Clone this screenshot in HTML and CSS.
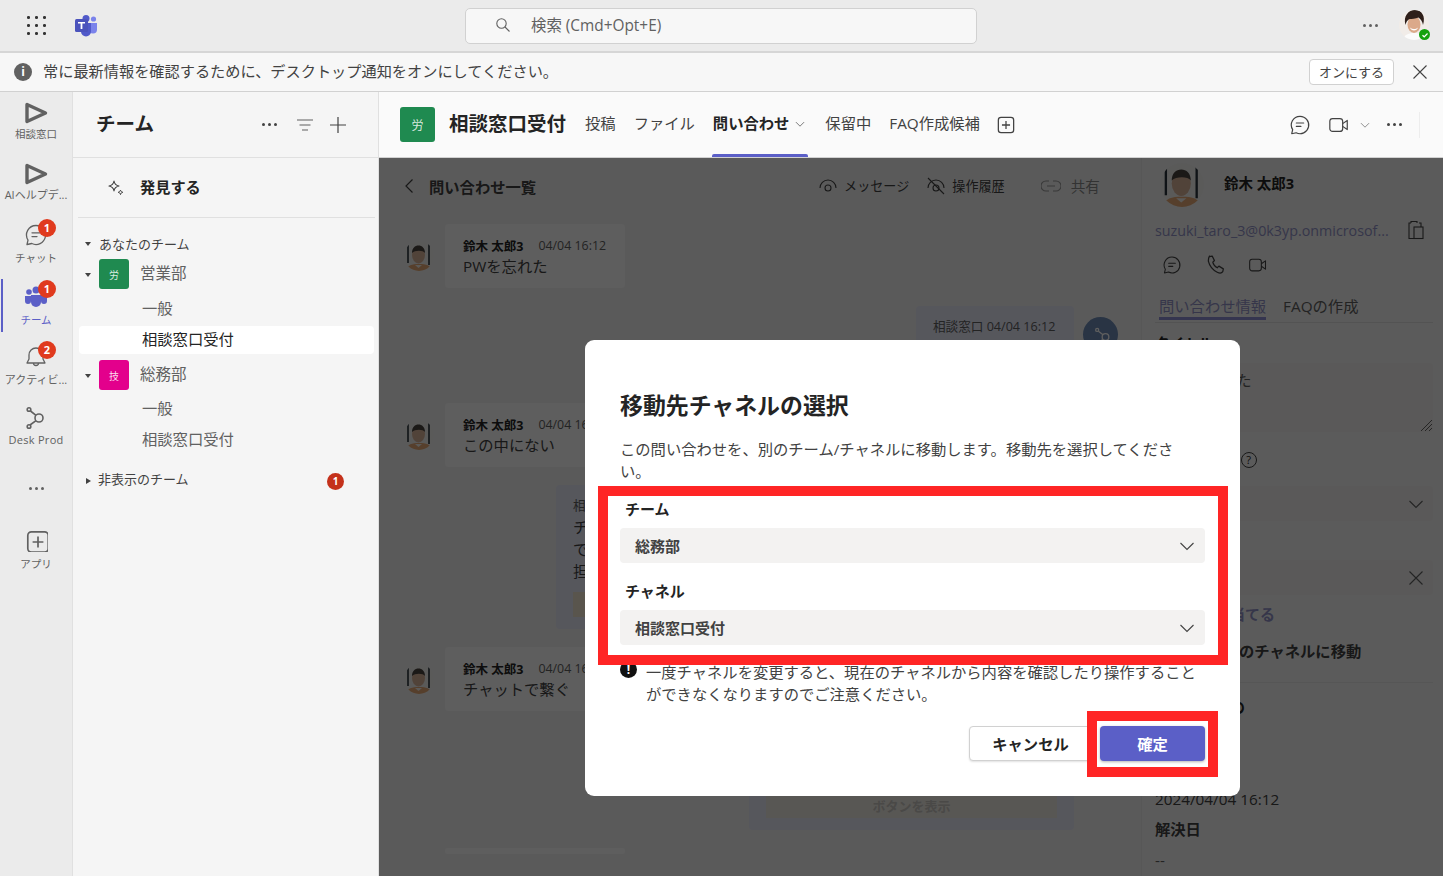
FILE: index.html
```html
<!DOCTYPE html>
<html lang="ja">
<head>
    <meta charset="UTF-8">
    <meta name="viewport" content="width=device-width, initial-scale=1.0">
    <title>相談窓口受付</title>
    <link rel="stylesheet" href="styles.css">
</head>
<body>
    <svg class="defs" width="0" height="0">
        <symbol id="i-send" viewBox="0 0 24 24"><path d="M3 3.500 21.500 12 3 20.500Z" fill="none" stroke="currentColor" stroke-width="3.400" stroke-linejoin="round"/></symbol>
        <symbol id="i-chat" viewBox="0 0 24 24"><path d="M12 2.500a9.500 9.500 0 1 1-4.200 18L3 21.500l1-4.400A9.500 9.500 0 0 1 12 2.500Z" fill="none" stroke="currentColor" stroke-width="1.300" stroke-linejoin="round"/><path d="M8 9.800h8M8 13.600h5" stroke="currentColor" stroke-width="1.300" stroke-linecap="round"/></symbol>
        <symbol id="i-video" viewBox="0 0 24 24"><rect x="2" y="5" width="14" height="14" rx="3" fill="none" stroke="currentColor" stroke-width="1.300"/><path d="M16 10.500 21 7v10l-5-3.500" fill="none" stroke="currentColor" stroke-width="1.300" stroke-linejoin="round"/></symbol>
        <symbol id="i-chev" viewBox="0 0 16 16"><path d="M1.500 5 8 11.500 14.500 5" fill="none" stroke="currentColor" stroke-width="1.100"/></symbol>
        <symbol id="i-x" viewBox="0 0 16 16"><path d="M1.500 1.500l13 13M14.500 1.500l-13 13" fill="none" stroke="currentColor" stroke-width="1.100"/></symbol>
        <symbol id="i-plusbox" viewBox="0 0 20 20"><rect x="1.500" y="1.500" width="17" height="17" rx="3" fill="none" stroke="currentColor" stroke-width="1.400"/><path d="M10 5.500v9M5.500 10h9" stroke="currentColor" stroke-width="1.400"/></symbol>
        <symbol id="i-hub" viewBox="0 0 24 24"><g fill="none" stroke="currentColor" stroke-width="1.600"><circle cx="15" cy="12" r="4"/><circle cx="5" cy="3.500" r="1.800"/><circle cx="5" cy="20.500" r="1.800"/><path d="M6.500 5 12 9.300M6 19l6-4.300"/></g></symbol>
        <symbol id="i-man" viewBox="0 0 30 30">
            <rect width="30" height="30" fill="#f4f4f2"/>
            <path d="M4 0v22M25 2v22" stroke="#2a343c" stroke-width="1.600"/>
            <path d="M2 30c1-6 6-7 13-7s12 1 13 7Z" fill="#e9ac78"/>
            <ellipse cx="14.500" cy="14" rx="6.500" ry="8.500" fill="#dcb69c"/>
            <path d="M8 12c0-5 3-7.500 6.500-7.500S21 7 21 12c-2-3-10-3-13 0Z" fill="#4a4540"/>
            <path d="M11 24l3.500 3 3.500-3" fill="#f6f3ee"/>
        </symbol>
    </svg>

    <header class="topbar">
        <span class="waffle"><i></i><i></i><i></i><i></i><i></i><i></i><i></i><i></i><i></i></span>
        <svg class="teams-logo" width="24" height="22" viewBox="0 0 24 22">
            <circle cx="19.500" cy="4" r="2.600" fill="#7b83eb"/>
            <path d="M15 8h8v6.500a4 4 0 0 1-8 0Z" fill="#7b83eb"/>
            <circle cx="12" cy="3.500" r="3.500" fill="#5059c9"/>
            <path d="M7 8h10v8.500a5 5 0 0 1-10 0Z" fill="#5059c9"/>
            <rect x="1" y="4" width="13" height="13" rx="1.500" fill="#4b53bc"/>
            <path d="M4 7h7v1.600H8.400V14H6.600V8.600H4Z" fill="#fff"/>
        </svg>
        <div class="search">
            <svg width="16" height="16" viewBox="0 0 16 16"><circle cx="6.500" cy="6.500" r="4.700" fill="none" stroke="#616161" stroke-width="1.100"/><path d="M10 10l4.500 4.500" stroke="#616161" stroke-width="1.100"/></svg>
            <span>検索 (Cmd+Opt+E)</span>
        </div>
        <span class="dots top-dots"><i></i><i></i><i></i></span>
        <span class="me">
            <svg width="30" height="30" viewBox="0 0 30 30">
                <clipPath id="me-clip"><circle cx="15" cy="15" r="15"/></clipPath>
                <g clip-path="url(#me-clip)">
                    <rect width="30" height="30" fill="#f1ece8"/>
                    <path d="M4 30c1-5 5-7 11-7s10 2 11 7Z" fill="#fbfbfb"/>
                    <ellipse cx="15" cy="14.500" rx="6.500" ry="8.500" fill="#dba98a"/>
                    <path d="M6.500 15C4 6 9.500 0 16 0s11 6 8 15c-.5-3-2-6-4.500-7.500-3 1.500-7 1.500-9 1.500-2 1-3.500 3-4 6Z" fill="#2e1f1a"/>
                    <path d="M11 17.500c2.500 2 5.500 2 8 0-1 4-7 4-8 0Z" fill="#fff"/>
                </g>
            </svg>
            <span class="status"><svg width="8" height="8" viewBox="0 0 8 8"><path d="M1.500 4.200 3.200 5.800 6.500 2.500" fill="none" stroke="#fff" stroke-width="1.200"/></svg></span>
        </span>
    </header>

    <div class="notice">
        <span class="info-icon">i</span>
        <span class="notice-text">常に最新情報を確認するために、デスクトップ通知をオンにしてください。</span>
        <button class="notice-btn">オンにする</button>
        <svg class="notice-close" width="16" height="16"><use href="#i-x"/></svg>
    </div>

    <div class="app">
        <nav class="rail">
            <a class="rail-item"><svg width="24" height="24"><use href="#i-send"/></svg><span>相談窓口</span></a>
            <a class="rail-item"><svg width="24" height="24"><use href="#i-send"/></svg><span class="wide">AIヘルプデ...</span></a>
            <a class="rail-item rail-low"><svg width="24" height="24"><use href="#i-chat"/></svg><b class="badge">1</b><span>チャット</span></a>
            <a class="rail-item rail-low active">
                <svg width="24" height="24" viewBox="0 0 24 24" fill="#5b5fc7"><circle cx="5" cy="8" r="2.800"/><circle cx="19" cy="8" r="2.800"/><circle cx="12" cy="6" r="3.500"/><path d="M1 12h6v5a3 3 0 0 1-6 0ZM17 12h6v5a3 3 0 0 1-6 0Z"/><path d="M7 11h10v7a5 5 0 0 1-10 0Z"/></svg>
                <b class="badge">1</b><span>チーム</span>
            </a>
            <a class="rail-item rail-low">
                <svg width="24" height="24" viewBox="0 0 24 24"><path d="M12 3a7 7 0 0 1 7 7v4l2 4H3l2-4v-4a7 7 0 0 1 7-7Z" fill="none" stroke="currentColor" stroke-width="1.300" stroke-linejoin="round"/><path d="M9.500 18a2.500 2.500 0 0 0 5 0" fill="none" stroke="currentColor" stroke-width="1.300"/></svg>
                <b class="badge">2</b><span class="wide">アクティビ...</span>
            </a>
            <a class="rail-item rail-hub"><svg width="24" height="24"><use href="#i-hub"/></svg><span class="latin">Desk Prod</span></a>
            <a class="rail-item rail-more"><span class="dots"><i></i><i></i><i></i></span></a>
            <a class="rail-item rail-apps"><svg width="24" height="24" viewBox="-2 -2 24 24"><use href="#i-plusbox"/></svg><span>アプリ</span></a>
        </nav>

        <aside class="teams">
            <div class="teams-head">
                <h2>チーム</h2>
                <span class="dots"><i></i><i></i><i></i></span>
                <svg class="head-filter" width="16" height="12" viewBox="0 0 16 12"><path d="M0 1h16M2.500 6h11M5 11h6" stroke="#616161" stroke-width="1.100"/></svg>
                <svg class="head-plus" width="16" height="16" viewBox="0 0 16 16"><path d="M8 0v16M0 8h16" stroke="#424242" stroke-width="1.200"/></svg>
            </div>
            <div class="discover">
                <svg width="18" height="18" viewBox="0 0 18 18"><path d="M7 2c.5 3 2 4.500 5 5-3 .5-4.500 2-5 5-.5-3-2-4.500-5-5 3-.5 4.500-2 5-5Z" fill="none" stroke="#424242" stroke-width="1.100" stroke-linejoin="round"/><path d="M13.500 11c.2 1.300 1 2 2.300 2.300-1.300.2-2 1-2.300 2.300-.2-1.300-1-2-2.300-2.300 1.300-.3 2-1 2.300-2.300Z" fill="none" stroke="#424242" stroke-width="1"/></svg>
                <span>発見する</span>
            </div>
            <div class="tree">
                <div class="section-row"><i class="caret"></i>あなたのチーム</div>
                <div class="team-row"><i class="caret"></i><span class="tile tile-green">労</span><span class="team-name">営業部</span></div>
                <div class="channels">
                    <div class="channel">一般</div>
                    <div class="channel selected">相談窓口受付</div>
                </div>
                <div class="team-row"><i class="caret"></i><span class="tile tile-pink">技</span><span class="team-name">総務部</span></div>
                <div class="channels channels-next">
                    <div class="channel">一般</div>
                    <div class="channel">相談窓口受付</div>
                </div>
                <div class="section-row hidden-teams"><i class="caret caret-right"></i>非表示のチーム<b class="count">1</b></div>
            </div>
        </aside>

        <main class="content">
            <div class="channel-head">
                <span class="tile tile-big tile-green">労</span>
                <h1>相談窓口受付</h1>
                <nav class="tabs">
                    <a>投稿</a>
                    <a>ファイル</a>
                    <a class="on">問い合わせ<svg width="10" height="10"><use href="#i-chev"/></svg></a>
                    <a>保留中</a>
                    <a>FAQ作成候補</a>
                </nav>
                <svg class="tab-add" width="18" height="18" viewBox="0 0 20 20"><use href="#i-plusbox"/></svg>
                <div class="head-actions">
                    <svg width="22" height="22"><use href="#i-chat"/></svg>
                    <svg class="act-video" width="22" height="22"><use href="#i-video"/></svg>
                    <svg class="act-chev" width="10" height="10"><use href="#i-chev"/></svg>
                    <span class="dots"><i></i><i></i><i></i></span>
                    <i class="act-rule"></i>
                </div>
            </div>

            <div class="body">
                <section class="chat">
                    <div class="chat-head">
                        <svg width="10" height="16" viewBox="0 0 10 16"><path d="M8.500 1.500 2 8l6.500 6.500" fill="none" stroke="#424242" stroke-width="1.200"/></svg>
                        <strong>問い合わせ一覧</strong>
                        <span class="chat-tool tool-first"><svg width="18" height="18" viewBox="0 0 18 18"><path d="M1 11a8 8 0 0 1 16 0" fill="none" stroke="#424242" stroke-width="1.100"/><circle cx="9" cy="11" r="3" fill="none" stroke="#424242" stroke-width="1.100"/></svg>メッセージ</span>
                        <span class="chat-tool"><svg width="18" height="18" viewBox="0 0 18 18"><path d="M1 11a8 8 0 0 1 16 0" fill="none" stroke="#424242" stroke-width="1.100"/><circle cx="9" cy="11" r="3" fill="none" stroke="#424242" stroke-width="1.100"/><path d="M1 1l16 16" stroke="#424242" stroke-width="1.100"/></svg>操作履歴</span>
                        <span class="chat-tool tool-off"><svg width="20" height="12" viewBox="0 0 20 12"><path d="M8 1H5a5 5 0 0 0 0 10h3M12 1h3a5 5 0 0 1 0 10h-3M6 6h8" fill="none" stroke="#9a9a9a" stroke-width="1.100"/></svg>共有</span>
                    </div>
                    <div class="messages">
                        <div class="msg">
                            <svg class="avatar" width="30" height="30"><use href="#i-man"/></svg>
                            <div class="bubble">
                                <div class="meta"><b>鈴木 太郎3</b><span>04/04 16:12</span></div>
                                <p>PWを忘れた</p>
                            </div>
                        </div>
                        <div class="msg-out out-short">
                            <div class="meta-out">相談窓口 04/04 16:12</div>
                            <span class="bot"><svg width="20" height="20" viewBox="-3 -3 30 30" color="#fff"><use href="#i-hub"/></svg></span>
                        </div>
                        <div class="msg">
                            <svg class="avatar" width="30" height="30"><use href="#i-man"/></svg>
                            <div class="bubble bubble-wide">
                                <div class="meta"><b>鈴木 太郎3</b><span>04/04 16:12</span></div>
                                <p>この中にない</p>
                            </div>
                        </div>
                        <div class="msg-out out-tall">
                            <div class="meta-out">相談窓口</div>
                            <p>チャット</p>
                            <p>で</p>
                            <p>担当</p>
                            <div class="out-btn"></div>
                        </div>
                        <div class="msg">
                            <svg class="avatar" width="30" height="30"><use href="#i-man"/></svg>
                            <div class="bubble bubble-wide">
                                <div class="meta"><b>鈴木 太郎3</b><span>04/04 16:12</span></div>
                                <p>チャットで繋ぐ</p>
                            </div>
                        </div>
                        <div class="msg-out out-last">
                            <div class="out-btn out-btn-last">ボタンを表示</div>
                        </div>
                        <div class="msg"><div class="bubble bubble-end"></div></div>
                    </div>
                </section>

                <aside class="detail">
                    <div class="person">
                        <svg class="person-photo" width="44" height="44" viewBox="0 0 30 30"><use href="#i-man"/></svg>
                        <b>鈴木 太郎3</b>
                    </div>
                    <div class="mail">
                        <span>suzuki_taro_3@0k3yp.onmicrosof...</span>
                        <svg width="18" height="20" viewBox="0 0 18 20"><path d="M4 3H2v15.500h5M4 3V1.500h6V3M12 3h2v4" fill="none" stroke="#424242" stroke-width="1.100"/><rect x="7" y="7" width="9" height="11.500" fill="none" stroke="#424242" stroke-width="1.100"/></svg>
                    </div>
                    <div class="person-actions">
                        <svg width="20" height="20"><use href="#i-chat"/></svg>
                        <svg width="20" height="20" viewBox="0 0 18 18"><path d="M4 1.500 6.500 1l2 4-1.500 1.500c.5 2 2 4 4 5L12.500 10l4 2.500-.5 2.500c-1 1.500-3 1.500-5 .5-4-2-7-6-8-10 0-1.500 0-3 1-4.500Z" fill="none" stroke="#424242" stroke-width="1.100" stroke-linejoin="round"/></svg>
                        <svg width="20" height="20"><use href="#i-video"/></svg>
                    </div>
                    <div class="detail-tabs"><a class="on">問い合わせ情報</a><a>FAQの作成</a></div>
                    <div class="field-label">タイトル</div>
                    <div class="textarea">PWを忘れた<svg width="12" height="12" viewBox="0 0 12 12"><path d="M1 12 12 1M5 12l7-7M9 12l3-3" stroke="#424242" stroke-width=".8"/></svg></div>
                    <div class="field-label field-help">問題の種類<i>?</i></div>
                    <div class="dropdown">選択<svg width="16" height="16"><use href="#i-chev"/></svg></div>
                    <div class="field-label field-gap">担当者</div>
                    <div class="dropdown dropdown-x">担当者<svg width="16" height="16"><use href="#i-x"/></svg></div>
                    <div class="assign">自分に割り当てる</div>
                    <div class="move">別のチームのチャネルに移動</div>
                    <div class="detail-sub">問い合わせの</div>
                    <div class="detail-date">2024/04/04 16:12</div>
                    <div class="detail-sub2">解決日</div>
                    <div class="detail-none">--</div>
                </aside>

                <div class="overlay">
                    <div class="modal">
                        <h3>移動先チャネルの選択</h3>
                        <p class="modal-desc">この問い合わせを、別のチーム/チャネルに移動します。移動先を選択してください。</p>
                        <label class="modal-label">チーム</label>
                        <div class="select">総務部<svg width="16" height="16"><use href="#i-chev"/></svg></div>
                        <label class="modal-label">チャネル</label>
                        <div class="select">相談窓口受付<svg width="16" height="16"><use href="#i-chev"/></svg></div>
                        <div class="warn">
                            <span class="warn-icon">!</span>
                            <p>一度チャネルを変更すると、現在のチャネルから内容を確認したり操作することができなくなりますのでご注意ください。</p>
                        </div>
                        <div class="modal-foot">
                            <button class="btn-cancel">キャンセル</button>
                            <button class="btn-ok">確定</button>
                        </div>
                        <div class="mark mark-form"></div>
                        <div class="mark mark-ok"></div>
                    </div>
                </div>
            </div>
        </main>
    </div>
</body>
</html>
```

FILE: styles.css
```css
* {
    box-sizing: border-box;
}
html, body {
    height: 100%;
}
body {
    margin: 0;
    display: flex;
    flex-direction: column;
    overflow: hidden;
    background-color: #f5f5f5;
    color: #242424;
    font-family: "Open Sans", "Noto Sans CJK JP", sans-serif;
    font-size: 15.3px;
}
p, h1, h2, h3 {
    margin: 0;
}
.defs {
    position: absolute;
}
.dots {
    display: inline-flex;
    gap: 3px;
}
.dots i {
    width: 3px;
    height: 3px;
    border-radius: 50%;
    background-color: #424242;
}

/* top bar */
.topbar {
    flex: none;
    height: 53px;
    display: flex;
    align-items: center;
    background-color: #ebebeb;
    border-bottom: 2px solid #d6d6d6;
}
.waffle {
    margin-left: 27px;
    width: 18px;
    display: grid;
    grid-template-columns: repeat(3, 2.5px);
    gap: 5.5px;
}
.waffle i {
    width: 2.5px;
    height: 2.5px;
    background-color: #333;
    border-radius: 50%;
}
.teams-logo {
    margin-left: 29px;
}
.search {
    margin-left: 367px;
    width: 512px;
    height: 36px;
    display: flex;
    align-items: center;
    gap: 20px;
    padding-left: 29px;
    padding-bottom: 1px;
    background-color: #f7f7f7;
    border: 1px solid #d1d1d1;
    border-radius: 5px;
    color: #616161;
    font-size: 15.4px;
}
.search span {
    padding-bottom: 1px;
}
.top-dots {
    margin-left: 386px;
}
.top-dots i {
    background-color: #616161;
}
.me {
    position: relative;
    margin-left: 21px;
    width: 30px;
    height: 30px;
    margin-top: -1px;
}
.status {
    position: absolute;
    right: -1px;
    bottom: 0;
    width: 11px;
    height: 11px;
    display: flex;
    align-items: center;
    justify-content: center;
    border-radius: 50%;
    background-color: #13a10e;
}

/* notice */
.notice {
    flex: none;
    height: 39px;
    display: flex;
    align-items: center;
    padding-left: 14px;
    background-color: #f7f7f7;
    border-bottom: 1px solid #d1d1d1;
    color: #424242;
}
.info-icon {
    width: 18px;
    height: 18px;
    border-radius: 50%;
    background-color: #616161;
    color: #fff;
    font-size: 12px;
    font-weight: 700;
    line-height: 18px;
    text-align: center;
}
.notice-text {
    margin-left: 11px;
    padding-bottom: 5px;
    font-size: 15.2px;
}
.notice-btn {
    margin-left: auto;
    width: 85px;
    height: 26px;
    padding: 0 0 2px;
    background-color: #fff;
    border: 1px solid #d1d1d1;
    border-radius: 4px;
    color: #424242;
    font-family: inherit;
    font-size: 13px;
}
.notice-close {
    margin: 0 15px 0 18px;
    color: #424242;
}

/* left rail */
.app {
    flex: 1;
    min-height: 0;
    display: flex;
}
.rail {
    flex: none;
    width: 73px;
    background-color: #ebebeb;
    border-right: 1px solid #e0e0e0;
}
.rail-item {
    position: relative;
    height: 61px;
    display: flex;
    flex-direction: column;
    align-items: center;
    padding-top: 9px;
    color: #616161;
    font-size: 10.5px;
    line-height: 16px;
}
.rail-item svg {
    flex: none;
}
.rail-item span {
    margin-top: 1px;
    white-space: nowrap;
}
.rail-item .wide {
    font-size: 11px;
}
.rail-low svg {
    margin-bottom: 2px;
}
.rail-low.active svg {
    margin-bottom: 3px;
}
.rail-item .latin {
    font-size: 11px;
    letter-spacing: .3px;
}
.rail-hub span {
    margin-top: 2px;
}
.rail-more {
    padding-top: 28px;
}
.rail-more .dots i {
    background-color: #616161;
}
.rail-apps span {
    margin-top: 4px;
}
.rail-item.active {
    color: #5b5fc7;
}
.rail-item.active::before {
    content: "";
    position: absolute;
    left: 1px;
    top: 4px;
    width: 2px;
    height: 53px;
    background-color: #5b5fc7;
}
.badge {
    position: absolute;
    left: 38px;
    top: 5px;
    width: 18px;
    height: 18px;
    border-radius: 50%;
    background-color: #e03a1e;
    color: #fff;
    font-size: 11px;
    line-height: 18px;
    text-align: center;
}

/* team list */
.teams {
    flex: none;
    width: 306px;
    background-color: #f5f5f5;
    border-right: 1px solid #e0e0e0;
}
.teams-head {
    height: 66px;
    display: flex;
    align-items: center;
    padding-left: 23px;
    border-bottom: 1px solid #e0e0e0;
}
.teams-head h2 {
    width: 144px;
    padding-bottom: 5px;
    font-size: 19.5px;
    font-weight: 700;
}
.teams-head .dots {
    margin-left: 22px;
}
.head-filter {
    margin-left: 20px;
}
.head-plus {
    margin-left: 17px;
}
.discover {
    height: 60px;
    margin: 0 3px 0 5px;
    display: flex;
    align-items: center;
    gap: 15px;
    padding-left: 29px;
    border-bottom: 1px solid #e0e0e0;
    font-size: 15.2px;
    font-weight: 700;
}
.discover span {
    padding-bottom: 4px;
}
.tree {
    padding: 16px 4px 0 6px;
}
.section-row {
    height: 20px;
    display: flex;
    align-items: center;
    padding-bottom: 2px;
    color: #424242;
    font-size: 13px;
}
.caret {
    flex: none;
    width: 0;
    height: 0;
    margin: 2px 8px 0 6px;
    border-left: 3.5px solid transparent;
    border-right: 3.5px solid transparent;
    border-top: 4.5px solid #424242;
}
.caret-right {
    margin: 6px 7px 0 7px;
    border-top: 3.5px solid transparent;
    border-bottom: 3.5px solid transparent;
    border-left: 5px solid #424242;
    border-right: 0;
}
.team-row {
    height: 30px;
    margin-top: 5px;
    display: flex;
    align-items: center;
    color: #616161;
    font-size: 15.5px;
}
.team-name {
    padding-bottom: 3px;
}
.tile {
    flex: none;
    width: 30px;
    height: 30px;
    display: flex;
    align-items: center;
    justify-content: center;
    border-radius: 3px;
    color: rgba(255, 255, 255, .85);
    font-size: 10px;
}
.team-row .tile {
    margin-right: 11px;
}
.tile-green {
    background-color: #1f8a50;
}
.tile-pink {
    background-color: #e3008c;
}
.channels {
    margin-top: 6px;
    display: flex;
    flex-direction: column;
    gap: 3px;
    padding-bottom: 1px;
}
.channels-next {
    margin-top: 5px;
}
.channel {
    height: 28px;
    line-height: 27px;
    padding-left: 63px;
    color: #616161;
}
.channel.selected {
    background-color: #fff;
    border-radius: 4px;
    color: #242424;
}
.hidden-teams {
    margin-top: 14px;
    position: relative;
}
.count {
    position: absolute;
    left: 248px;
    top: 4px;
    width: 17px;
    height: 17px;
    border-radius: 50%;
    background-color: #c4311b;
    color: #fff;
    font-size: 10px;
    line-height: 17px;
    text-align: center;
}

/* channel header */
.content {
    flex: 1;
    min-width: 0;
    display: flex;
    flex-direction: column;
}
.channel-head {
    flex: none;
    height: 66px;
    display: flex;
    align-items: center;
    padding-left: 21px;
    background-color: #fafafa;
    border-bottom: 1px solid #d1d1d1;
}
.tile-big {
    width: 35px;
    height: 35px;
    font-size: 12px;
}
.channel-head h1 {
    margin-left: 14px;
    padding-bottom: 5px;
    font-size: 19.5px;
    font-weight: 700;
}
.tabs {
    margin-left: 19px;
    height: 100%;
    display: flex;
    gap: 18px;
}
.tabs a {
    position: relative;
    display: flex;
    align-items: center;
    gap: 6px;
    padding-bottom: 5px;
    color: #424242;
    font-size: 15.3px;
}
.tabs a.on {
    padding-right: 2px;
    font-weight: 700;
    color: #242424;
}
.tabs a.on::after {
    content: "";
    position: absolute;
    left: -1px;
    right: -1px;
    bottom: 0;
    height: 3px;
    border-radius: 2px 2px 0 0;
    background-color: #5b5fc7;
}
.tabs a.on svg {
    margin-top: 3px;
    color: #424242;
}
.tab-add {
    margin-left: 17px;
    color: #424242;
}
.head-actions {
    margin-left: auto;
    display: flex;
    align-items: center;
    padding-right: 23px;
    color: #424242;
}
.act-video {
    margin-left: 17px;
}
.act-chev {
    margin-left: 10px;
    color: #616161;
}
.head-actions .dots {
    margin-left: 17px;
}
.act-rule {
    margin-left: 17px;
    width: 1px;
    height: 26px;
    background-color: #ededed;
}

/* chat behind the dialog */
.body {
    flex: 1;
    min-height: 0;
    display: flex;
    position: relative;
    overflow: hidden;
}
.chat {
    width: 762px;
    flex: none;
    overflow: hidden;
}
.chat-head {
    height: 58px;
    display: flex;
    align-items: center;
    padding-left: 25px;
    padding-bottom: 3px;
    color: #424242;
    font-size: 13.1px;
}
.chat-head strong {
    margin-left: 15px;
    font-size: 15.3px;
    font-weight: 700;
    color: #424242;
}
.chat-tool {
    display: flex;
    align-items: center;
    gap: 7px;
    margin-left: 18px;
}
.tool-first {
    margin-left: 283px;
}
.tool-off {
    margin-left: 36px;
    gap: 10px;
    color: #8a8a8a;
    font-size: 14.6px;
}
.messages {
    padding: 8px 67px 0 25px;
    display: flex;
    flex-direction: column;
    gap: 18px;
}
.msg {
    display: flex;
    align-items: center;
    gap: 11px;
}
.avatar {
    flex: none;
    border-radius: 50%;
}
.bubble {
    width: 180px;
    height: 64px;
    padding: 11px 18px;
    background-color: #fff;
    border-radius: 4px;
}
.bubble-wide {
    width: 300px;
}
.bubble-end {
    height: 6px;
    padding: 0;
    margin-left: 41px;
}
.meta {
    display: flex;
    align-items: center;
    gap: 15px;
    height: 20px;
    font-size: 12.4px;
    color: #616161;
    white-space: nowrap;
}
.meta b {
    color: #242424;
    font-size: 12.5px;
}
.bubble p {
    color: #424242;
    font-size: 15.3px;
    line-height: 22px;
}
.msg-out {
    position: relative;
    align-self: flex-end;
    padding: 11px 17px;
    background-color: #e8ebfa;
    border-radius: 4px;
    color: #424242;
}
.out-short {
    width: 158px;
    height: 79px;
}
.out-tall {
    width: 518px;
    height: 144px;
    line-height: 22px;
}
.out-last {
    width: 325px;
    height: 101px;
}
.meta-out {
    font-size: 12.6px;
    line-height: 20px;
    color: #616161;
    white-space: nowrap;
}
.bot {
    position: absolute;
    left: 167px;
    top: 11px;
    width: 35px;
    height: 35px;
    display: flex;
    align-items: center;
    justify-content: center;
    border-radius: 50%;
    background-color: #6f8db8;
}
.out-btn {
    height: 25px;
    margin-top: 10px;
    width: 100%;
    background-color: #f0e6d0;
}
.out-btn-last {
    position: absolute;
    left: 17px;
    right: 17px;
    bottom: 12px;
    width: auto;
    height: 60px;
    display: flex;
    align-items: flex-end;
    justify-content: center;
    padding-bottom: 3px;
    background-color: #efece5;
    color: #c8c5c0;
    font-size: 13px;
    font-weight: 700;
}

/* details column */
.detail {
    flex: 1;
    min-width: 0;
    padding: 5px 10px 0 13px;
    background-color: #f7f7f7;
    border-left: 1px solid #ededed;
    color: #242424;
}
.person {
    display: flex;
    align-items: center;
    gap: 20px;
    font-size: 14.5px;
    height: 44px;
    padding-left: 5px;
}
.person b {
    padding-bottom: 5px;
}
.person-photo {
    border-radius: 50%;
}
.mail {
    margin-top: 11px;
    height: 24px;
    display: flex;
    align-items: center;
    justify-content: space-between;
    padding-right: 8px;
    color: #9394c9;
    font-size: 14.3px;
    white-space: nowrap;
}
.person-actions {
    margin-top: 13px;
    height: 20px;
    display: flex;
    gap: 23px;
    padding-left: 7px;
    color: #424242;
}
.detail-tabs {
    margin-top: 19px;
    height: 29px;
    display: flex;
    gap: 17px;
    padding-left: 4px;
    border-bottom: 1px solid #e0e0e0;
    color: #616161;
    line-height: 24px;
}
.detail-tabs a.on {
    height: 26px;
    color: #9394c9;
    border-bottom: 3px solid #8f90d6;
}
.field-label {
    margin-top: 9px;
    height: 24px;
    line-height: 24px;
    font-weight: 700;
    font-size: 14.5px;
}
.textarea {
    position: relative;
    margin-top: 7px;
    height: 69px;
    padding: 5px 8px 0 12px;
    background-color: #f3f2f1;
    border-radius: 4px;
    color: #616161;
}
.textarea svg {
    position: absolute;
    right: 1px;
    bottom: 1px;
}
.field-help {
    margin-top: 16px;
    display: flex;
    align-items: center;
    white-space: nowrap;
}
.field-help i {
    flex: none;
    margin-left: 13px;
    width: 16px;
    height: 16px;
    border: 1px solid #424242;
    border-radius: 50%;
    font-style: normal;
    font-size: 11px;
    font-weight: 400;
    line-height: 14px;
    text-align: center;
}
.dropdown {
    margin-top: 14px;
    height: 35px;
    display: flex;
    align-items: center;
    justify-content: space-between;
    padding: 0 9px 0 8px;
    background-color: #f3f2f1;
    border-radius: 4px;
    color: #616161;
}
.field-gap {
    margin-top: 19px;
    height: 20px;
    line-height: 20px;
}
.dropdown-x {
    margin-top: 0;
}
.assign {
    margin-top: 7px;
    height: 24px;
    line-height: 24px;
    font-weight: 700;
    color: #9394c9;
    font-size: 15px;
    white-space: nowrap;
}
.move {
    margin-top: 13px;
    height: 24px;
    line-height: 24px;
    padding-left: 8px;
    font-weight: 700;
    color: #424242;
    white-space: nowrap;
}
.detail-sub {
    margin-top: 19px;
    padding-top: 11px;
    border-top: 1px solid #e8e8e8;
    height: 40px;
    line-height: 26px;
    font-weight: 700;
    font-size: 15px;
}
.detail-date {
    margin-top: 65px;
    height: 24px;
    line-height: 24px;
    color: #424242;
}
.detail-sub2 {
    margin-top: 6px;
    height: 24px;
    line-height: 24px;
    font-weight: 700;
    color: #424242;
}
.detail-none {
    margin-top: 7px;
    height: 24px;
    line-height: 24px;
    color: #616161;
}

/* dialog */
.overlay {
    position: absolute;
    inset: 0;
    padding: 182px 0 0 206px;
    background-color: rgba(0, 0, 0, .63);
}
.modal {
    position: relative;
    width: 655px;
    height: 456px;
    padding: 51px 35px 0;
    background-color: #fff;
    border-radius: 9px;
}
.modal h3 {
    height: 29px;
    line-height: 29px;
    font-size: 22.9px;
    font-weight: 700;
}
.modal-desc {
    margin-top: 18px;
    padding-right: 28px;
    line-height: 22px;
    font-size: 15.3px;
    color: #424242;
}
.modal-label {
    display: block;
    margin: 17px 0 9px 5px;
    height: 20px;
    line-height: 20px;
    font-weight: 700;
    font-size: 15px;
}
.select + .modal-label {
    margin-top: 18px;
}
.select {
    height: 35px;
    display: flex;
    align-items: center;
    justify-content: space-between;
    padding: 0 10px 0 15px;
    background-color: #f3f2f1;
    border-radius: 4px;
    font-weight: 700;
    color: #424242;
    font-size: 15px;
}
.select svg {
    color: #424242;
}
.warn {
    margin-top: 16px;
    display: flex;
    gap: 9px;
    line-height: 22px;
    color: #424242;
    font-size: 15.3px;
}
.warn-icon {
    flex: none;
    width: 17px;
    height: 17px;
    border-radius: 50%;
    background-color: #111;
    color: #fff;
    font-size: 12px;
    font-weight: 700;
    line-height: 17px;
    text-align: center;
}
.warn p {
    width: 552px;
}
.modal-foot {
    margin-top: 21px;
    display: flex;
    justify-content: flex-end;
    gap: 8px;
}
.modal-foot button {
    height: 35px;
    padding: 0 0 2px;
    border-radius: 4px;
    font-family: inherit;
    font-size: 15.3px;
    font-weight: 700;
}
.btn-cancel {
    width: 123px;
    background-color: #fff;
    border: 1px solid #d1d1d1;
    color: #242424;
    box-shadow: 0 1px 2px rgba(0, 0, 0, .12);
}
.btn-ok {
    width: 105px;
    background-color: #5b5fc7;
    border: 0;
    color: #fff;
    box-shadow: 0 1px 3px rgba(0, 0, 0, .3);
}
.mark {
    position: absolute;
    border: 10px solid #ff2525;
}
.mark-form {
    left: 13px;
    top: 146px;
    width: 630px;
    height: 179px;
}
.mark-ok {
    left: 502px;
    top: 371px;
    width: 131px;
    height: 66px;
}
```
